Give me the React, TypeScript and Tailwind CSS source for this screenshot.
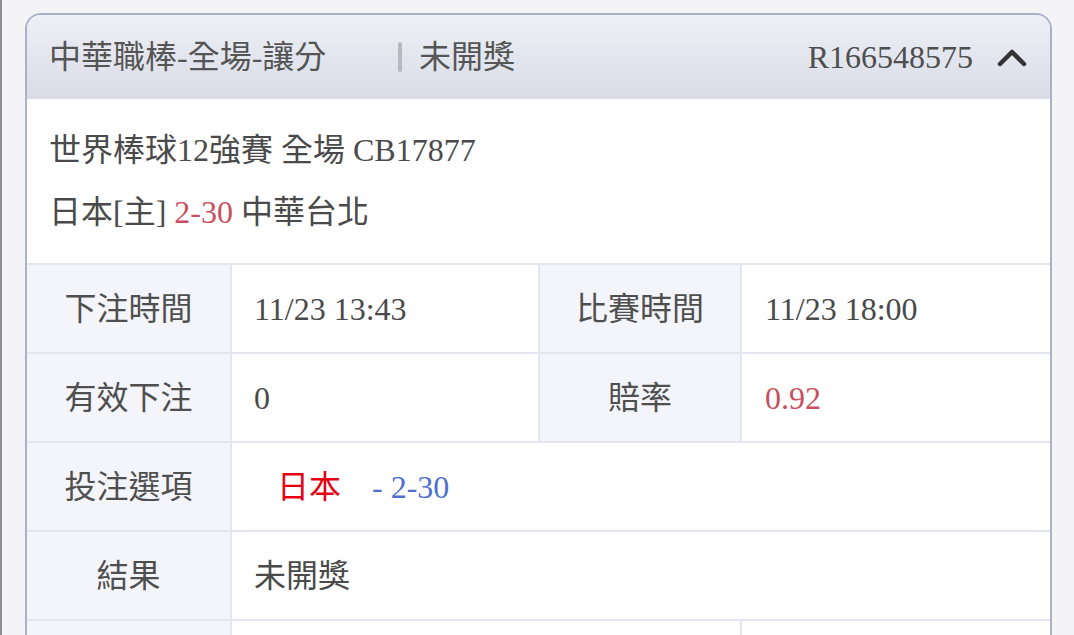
import React from "react";

const font = { fontFamily: '"Liberation Serif", "Noto Sans CJK TC", serif' };

function Label({ children, w }: { children: React.ReactNode; w: string }) {
  return (
    <div className={`${w} shrink-0 h-full flex items-center justify-center bg-[#f4f5fa] border-r-2 border-[#e3e5ef] text-[#4f4f4f]`}>
      {children}
    </div>
  );
}

export default function App() {
  return (
    <div className="h-[635px] overflow-hidden bg-[#f4f4f6] flex text-[32px] leading-none" style={font}>
      <div className="w-[2px] shrink-0 bg-[#8e8e8e]" />
      <div className="pl-[23px] pt-[13px]">
        <div className="w-[1027px] border-2 border-b-0 border-[#aab0c8] rounded-t-[16px] overflow-hidden bg-white">
          {/* header */}
          <div className="h-[84px] flex items-center pl-[22px] pr-[23px] bg-gradient-to-b from-[#eef0f6] to-[#d9dce7] text-[#555]">
            <div className="w-[349px] shrink-0">中華職棒-全場-讓分</div>
            <div className="w-[4px] h-[30px] bg-[#b8b8be] rounded-sm" />
            <div className="ml-[17px]">未開獎</div>
            <div className="ml-auto text-[#4e4e4e]">R166548575</div>
            <svg className="ml-[24px]" width="30" height="22" viewBox="0 0 30 22">
              <polyline points="3,18 15,6 27,18" fill="none" stroke="#333" strokeWidth="4.5" strokeLinecap="round" strokeLinejoin="round" />
            </svg>
          </div>
          {/* info */}
          <div className="pl-[22px] pt-[20px] pb-[20px] text-[#4a4a4a]">
            <div className="h-[62px] flex items-center">世界棒球12強賽 全場 CB17877</div>
            <div className="h-[62px] flex items-center">
              日本[主]&nbsp;<span className="text-[#c8505e]">2-30</span>&nbsp;中華台北
            </div>
          </div>
          {/* table */}
          <div>
            <div className="h-[89px] border-t-2 border-[#e3e5ef] flex">
              <Label w="w-[205px]">下注時間</Label>
              <div className="w-[308px] shrink-0 h-full flex items-center pl-[22px] border-r-2 border-[#e3e5ef] text-[#4a4a4a]">11/23 13:43</div>
              <Label w="w-[202px]">比賽時間</Label>
              <div className="flex-1 h-full flex items-center pl-[23px] text-[#4a4a4a]">11/23 18:00</div>
            </div>
            <div className="h-[89px] border-t-2 border-[#e3e5ef] flex">
              <Label w="w-[205px]">有效下注</Label>
              <div className="w-[308px] shrink-0 h-full flex items-center pl-[22px] border-r-2 border-[#e3e5ef] text-[#4a4a4a]">0</div>
              <Label w="w-[202px]">賠率</Label>
              <div className="flex-1 h-full flex items-center pl-[23px] text-[#c8505e]">0.92</div>
            </div>
            <div className="h-[89px] border-t-2 border-[#e3e5ef] flex">
              <Label w="w-[205px]">投注選項</Label>
              <div className="flex-1 h-full flex items-center pl-[45px]">
                <span className="text-[#e60012]">日本</span>
                <span className="ml-[31px] text-[#4f6fcf]">- 2-30</span>
              </div>
            </div>
            <div className="h-[89px] border-t-2 border-[#e3e5ef] flex">
              <Label w="w-[205px]">結果</Label>
              <div className="flex-1 h-full flex items-center pl-[22px] text-[#4a4a4a]">未開獎</div>
            </div>
            <div className="h-[89px] border-t-2 border-[#e3e5ef] flex">
              <Label w="w-[205px]"> </Label>
              <div className="w-[510px] shrink-0 h-full border-r-2 border-[#e3e5ef]" />
              <div className="flex-1" />
            </div>
          </div>
        </div>
      </div>
    </div>
  );
}
